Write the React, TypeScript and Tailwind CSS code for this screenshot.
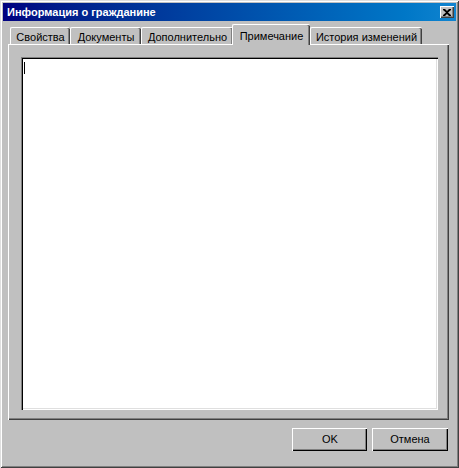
export default function App() {
  const tabs = [
    { label: 'Свойства', w: 'w-[60px]', active: false, extra: 'ml-[2px]' },
    { label: 'Документы', w: 'w-[71px]', active: false, extra: '' },
    { label: 'Дополнительно', w: 'w-[92px]', active: false, extra: '' },
    { label: 'Примечание', w: 'w-[78px]', active: true, extra: '-ml-[1px]' },
    { label: 'История изменений', w: 'w-[112px]', active: false, extra: '' },
  ];

  return (
    <div
      className="w-[459px] h-[468px] bg-[#c0c0c0] p-[3px] flex flex-col shadow-[inset_1px_1px_#dfdfdf,inset_-1px_-1px_#404040,inset_2px_2px_#ffffff,inset_-2px_-2px_#808080]"
      style={{ fontFamily: '"Liberation Sans", Arial, sans-serif' }}
    >
      {/* title bar */}
      <div className="h-[18px] flex items-center justify-between pl-[4px] pr-[2px] bg-gradient-to-r from-[#000080] to-[#1084d0]">
        <span className="text-white font-bold text-[11px] leading-none">
          Информация о гражданине
        </span>
        <div className="w-[14px] h-[12px] bg-[#c0c0c0] flex items-center justify-center shadow-[inset_1px_1px_#ffffff,inset_-1px_-1px_#404040,inset_-2px_-2px_#808080]">
          <svg width="8" height="7" viewBox="0 0 8 7">
            <path d="M0 0h2l2 2 2-2h2v1L5 3.5 8 6v1H6L4 5 2 7H0V6l3-2.5L0 1z" fill="#000" />
          </svg>
        </div>
      </div>

      {/* body */}
      <div className="flex flex-col pl-[5px] pt-[3px]">
        {/* tab row */}
        <div className="flex h-[20px] items-start">
          {tabs.map((t) => (
            <div
              key={t.label}
              className={`${t.w} ${t.extra} ${
                t.active ? 'h-[21px] relative z-10 pt-[5px]' : 'h-[17px] mt-[3px] pt-[3px]'
              } bg-[#c0c0c0] border-l border-t border-white rounded-t-[2px] shadow-[inset_-1px_0_#404040,inset_-2px_0_#808080] text-center text-[11px] leading-[13px] text-black whitespace-nowrap`}
            >
              {t.label}
            </div>
          ))}
        </div>

        {/* panel */}
        <div className="w-[441px] h-[376px] p-[12px] pb-[11px] bg-[#c0c0c0] border-t border-l border-white shadow-[inset_-1px_-1px_#404040,inset_-2px_-2px_#808080]">
          <div className="w-[417px] h-[353px] bg-white shadow-[inset_1px_1px_#808080,inset_2px_2px_#000000,inset_-1px_-1px_#ffffff,inset_-2px_-2px_#dfdfdf] pl-[3px] pt-[5px]">
            <div className="w-[1px] h-[12px] bg-black" />
          </div>
        </div>

        {/* buttons */}
        <div className="flex justify-end gap-[5px] mt-[8px] w-[441px] pr-[1px]">
          <button className="w-[75px] h-[23px] bg-[#c0c0c0] text-[11px] text-black shadow-[inset_1px_1px_#ffffff,inset_-1px_-1px_#000000,inset_-2px_-2px_#808080] pl-[1px]">
            OK
          </button>
          <button className="w-[76px] h-[23px] bg-[#c0c0c0] text-[11px] text-black shadow-[inset_1px_1px_#ffffff,inset_-1px_-1px_#000000,inset_-2px_-2px_#808080]">
            Отмена
          </button>
        </div>
      </div>
    </div>
  );
}
